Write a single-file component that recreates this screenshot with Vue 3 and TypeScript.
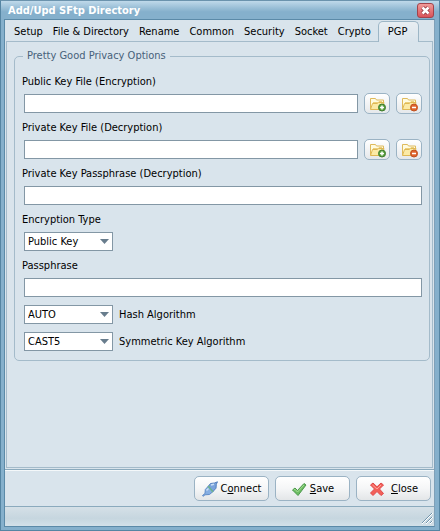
<script setup lang="ts">
import { ref } from 'vue'

interface KeyFile {
  id: string
  label: string
}

const tabs: string[] = ['Setup', 'File & Directory', 'Rename', 'Common', 'Security', 'Socket', 'Crypto', 'PGP']
const activeTab = ref('PGP')

const keyFiles: KeyFile[] = [
  { id: 'public-key', label: 'Public Key File (Encryption)' },
  { id: 'private-key', label: 'Private Key File (Decryption)' },
]
const paths = ref<Record<string, string>>({ 'public-key': '', 'private-key': '' })

const keyPassphrase = ref('')
const passphrase = ref('')
const encryptionType = ref('Public Key')
const hashAlgorithm = ref('AUTO')
const symmetricAlgorithm = ref('CAST5')

function clearPath(id: string): void {
  paths.value[id] = ''
}
</script>

<template>
  <div class="window">
    <header class="titlebar">
      <h1>Add/Upd SFtp Directory</h1>
      <button type="button" class="dismiss" aria-label="Close window">
        <svg viewBox="0 0 15 13" width="15" height="13">
          <path d="M4.500 3.500l6 6M10.500 3.500l-6 6" stroke="#8e3038" stroke-width="4" />
          <path d="M4.500 3.500l6 6M10.500 3.500l-6 6" stroke="#fff" stroke-width="2.500" />
        </svg>
      </button>
    </header>

    <div class="body">
      <nav class="tabs" role="tablist">
        <button
          v-for="tab in tabs"
          :key="tab"
          type="button"
          role="tab"
          class="tab"
          :class="{ active: tab === activeTab }"
          :aria-selected="tab === activeTab"
          @click="activeTab = tab"
        >{{ tab }}</button>
      </nav>

      <main class="page">
        <fieldset class="group">
          <legend>Pretty Good Privacy Options</legend>

          <div v-for="file in keyFiles" :key="file.id" class="field">
            <label :for="file.id">{{ file.label }}</label>
            <div class="line">
              <input :id="file.id" v-model="paths[file.id]" type="text" class="box grow" />
              <button type="button" class="icon-button" aria-label="Choose file">
                <svg viewBox="0 0 18 17" width="18" height="17" fill="none">
                  <path d="M2.500 14V3.500h5l1 1.500h7V13z" fill="#fffbe0" stroke="#dfba5c" />
                  <path d="M5 7.500h5l1-1h3" stroke="#ecd07c" />
                  <path d="M2.500 14.500l2-6h5l1-1h5.500l-2 7z" fill="#fbeaa6" stroke="#dfb854" />
                  <circle cx="14" cy="12.500" r="3.500" fill="#58a03f" stroke="#3f7d2e" />
                  <path d="M14 10.500v4M12 12.500h4" stroke="#fff" stroke-width="1.500" />
                </svg>
              </button>
              <button type="button" class="icon-button" aria-label="Clear file" @click="clearPath(file.id)">
                <svg viewBox="0 0 18 17" width="18" height="17" fill="none">
                  <path d="M2.500 14V3.500h5l1 1.500h7V13z" fill="#fffbe0" stroke="#dfba5c" />
                  <path d="M5 7.500h5l1-1h3" stroke="#ecd07c" />
                  <path d="M2.500 14.500l2-6h5l1-1h5.500l-2 7z" fill="#fbeaa6" stroke="#dfb854" />
                  <circle cx="14" cy="12.500" r="3.500" fill="#e0642c" stroke="#c04f1e" />
                  <path d="M12 12.500h4" stroke="#fff" stroke-width="1.500" />
                </svg>
              </button>
            </div>
          </div>

          <div class="field">
            <label for="key-passphrase">Private Key Passphrase (Decryption)</label>
            <div class="line">
              <input id="key-passphrase" v-model="keyPassphrase" type="password" class="box grow" />
            </div>
          </div>

          <div class="field">
            <label for="encryption-type">Encryption Type</label>
            <div class="line">
              <select id="encryption-type" v-model="encryptionType" class="box choice">
                <option>Public Key</option>
                <option>Passphrase</option>
              </select>
            </div>
          </div>

          <div class="field">
            <label for="passphrase">Passphrase</label>
            <div class="line">
              <input id="passphrase" v-model="passphrase" type="password" class="box grow" />
            </div>
          </div>

          <div class="algorithms">
            <div class="line algorithm">
              <select id="hash" v-model="hashAlgorithm" class="box choice">
                <option>AUTO</option>
              </select>
              <label for="hash">Hash Algorithm</label>
            </div>
            <div class="line algorithm">
              <select id="symmetric" v-model="symmetricAlgorithm" class="box choice">
                <option>CAST5</option>
              </select>
              <label for="symmetric">Symmetric Key Algorithm</label>
            </div>
          </div>
        </fieldset>
      </main>

      <div class="actions">
        <button type="button" class="action">
          <svg viewBox="0 0 16 16" width="16" height="16" fill="none">
            <path d="M.5 14.500l2.500-2 .3-4L6.500 5l4.500 5.500-3.500 3-4.500.3-2 1.500z" fill="#86aee2" stroke="#5f8cc8" stroke-linejoin="round" />
            <path d="M6.500 5L8.500 2.500l4-.5L15.500.8l-1.200 2.400-.3 4-3 3.300z" fill="#7aa3dc" stroke="#5580be" stroke-linejoin="round" />
            <path d="M6 5l5 6" stroke="#6fb58f" stroke-width="1.500" />
            <path d="M9 4l3-.8M4.500 9.500L6.500 7.500" stroke="#c9dff6" stroke-width="1.500" />
          </svg>
          <span>C<u>o</u>nnect</span>
        </button>
        <button type="button" class="action">
          <svg viewBox="0 0 16 16" width="16" height="16">
            <path d="M1.500 9l2.500-2 2.500 2.500L13 2.500l2 1.500-8 10.500z" fill="#6cbc62" stroke="#4c9a4c" stroke-linejoin="round" />
            <path d="M3 9l1-.7 2.500 2.700L13 4" fill="none" stroke="#a5dd92" />
          </svg>
          <span><u>S</u>ave</span>
        </button>
        <button type="button" class="action close">
          <svg viewBox="0 0 16 16" width="16" height="16">
            <path d="M4 2l4 3.800L12 2l2.500 2-4 4 4 4.500L12 14.500l-4-4-4 4-2.500-2.500 4-4-4-4z" fill="#f36058" stroke="#e0484a" stroke-linejoin="round" />
            <path d="M3.500 4L8 8l4-4" fill="none" stroke="#ffa097" />
          </svg>
          <span><u>C</u>lose</span>
        </button>
      </div>

      <footer class="status">
        <svg viewBox="0 0 12 12" width="12" height="12" fill="none">
          <path d="M1 12L12 1M5 12l7-7M9 12l3-3" stroke="#fff" />
          <path d="M1 11L11 1M5 11l6-6M9 11l2-2" stroke="#6f93ab" />
        </svg>
      </footer>
    </div>
  </div>
</template>

<style>
body {
  margin: 0;
}
</style>

<style scoped>
.window {
  box-sizing: border-box;
  display: flex;
  flex-direction: column;
  min-height: 100vh;
  padding: 0 4px 3px 3px;
  border: 1px solid #5585a3;
  border-top-color: #6b93ad;
  background: #85b0cc;
  color: #000;
  font: 11px/14px "DejaVu Sans Condensed", "DejaVu Sans", sans-serif;
}

button,
input,
select {
  margin: 0;
  font: inherit;
  color: inherit;
}

.titlebar {
  display: flex;
  align-items: center;
  justify-content: space-between;
  height: 18px;
  margin: 0 -4px 0 -3px;
  padding: 0 5px 0 7px;
  background: linear-gradient(#bfd9ea, #85b0cc 60%, #85b0cc);
}

h1 {
  margin: 0;
  padding-top: 2px;
  color: #fff;
  font-size: 11px;
  line-height: 16px;
  font-weight: bold;
}

.dismiss {
  box-sizing: border-box;
  display: flex;
  width: 17px;
  height: 15px;
  padding: 0;
  border: 1px solid #a2434b;
  border-radius: 3px;
  background: linear-gradient(#f09a98, #d9545a);
}

.body {
  flex: 1;
  display: flex;
  flex-direction: column;
  border: 1px solid #5b8aa8;
  border-right-color: #7fa0b8;
  background: #d9e4ec;
}

.tabs {
  display: flex;
  align-items: flex-end;
  height: 21px;
  padding: 0 4px;
}

.tab {
  height: 21px;
  padding: 3px 5px 0;
  border: 0;
  background: none;
  white-space: nowrap;
}

.tab.active {
  position: relative;
  height: 21px;
  margin-bottom: -1px;
  margin-left: 2px;
  padding: 0 11px 1px 9px;
  border: 1px solid #9db6c6;
  border-bottom: 0;
  border-radius: 5px 5px 0 0;
  background: linear-gradient(#e8eef2, #d9e4ec);
}

.page {
  flex: 1;
  margin: 0 1px;
  padding: 7px 2px 0 7px;
  border: 1px solid #a4bbca;
}

.group {
  min-width: 0;
  margin: 0;
  padding: 12px 7px 5px;
  border: 1px solid #a4bbca;
  border-radius: 5px;
}

legend {
  margin-left: 1px;
  padding: 0 4px;
  color: #47617a;
}

.field + .field {
  margin-top: 6px;
}

.field label {
  display: block;
  height: 17px;
}

.line {
  display: flex;
  align-items: center;
  gap: 6px;
  height: 23px;
  padding-left: 2px;
}

.algorithms {
  margin-top: 2px;
}

.algorithm {
  height: 27px;
}

.box {
  box-sizing: border-box;
  height: 19px;
  padding: 0 3px;
  border: 1px solid #8397a5;
  border-radius: 0;
  background: #fff;
  outline: 0;
}

.grow {
  flex: 1;
  min-width: 0;
}

.choice {
  width: 89px;
  appearance: none;
  background: #fff url("data:image/svg+xml,%3Csvg xmlns='http://www.w3.org/2000/svg' width='9' height='5'%3E%3Cpath d='M0 0h9L4.500 5z' fill='%23687d8d'/%3E%3C/svg%3E") no-repeat right 3px center;
}

.icon-button {
  box-sizing: border-box;
  display: flex;
  align-items: center;
  justify-content: center;
  width: 26px;
  height: 21px;
  padding: 0;
  border: 1px solid #9bb3c4;
  border-radius: 5px;
  background: linear-gradient(#fff, #e5e8eb);
}

.actions {
  display: flex;
  justify-content: flex-end;
  gap: 6px;
  margin-top: 1px;
  padding: 6px 3px 5px;
  border-top: 1px solid #8baabd;
  box-shadow: inset 0 1px #f4f8fa;
}

.action {
  box-sizing: border-box;
  display: flex;
  align-items: center;
  justify-content: center;
  gap: 3px;
  width: 75px;
  height: 25px;
  padding: 0;
  border: 1px solid #9bb3c4;
  border-radius: 5px;
  background: linear-gradient(#fff, #f5f6f7 50%, #e3e6e8);
}

.close {
  gap: 6px;
}

.status {
  display: flex;
  align-items: flex-end;
  justify-content: flex-end;
  height: 17px;
  padding: 0 1px 2px;
  border-top: 1px solid #8baabd;
  background: linear-gradient(#d5e0e7, #c6d6df 60%, #d3e1e9);
}
</style>
